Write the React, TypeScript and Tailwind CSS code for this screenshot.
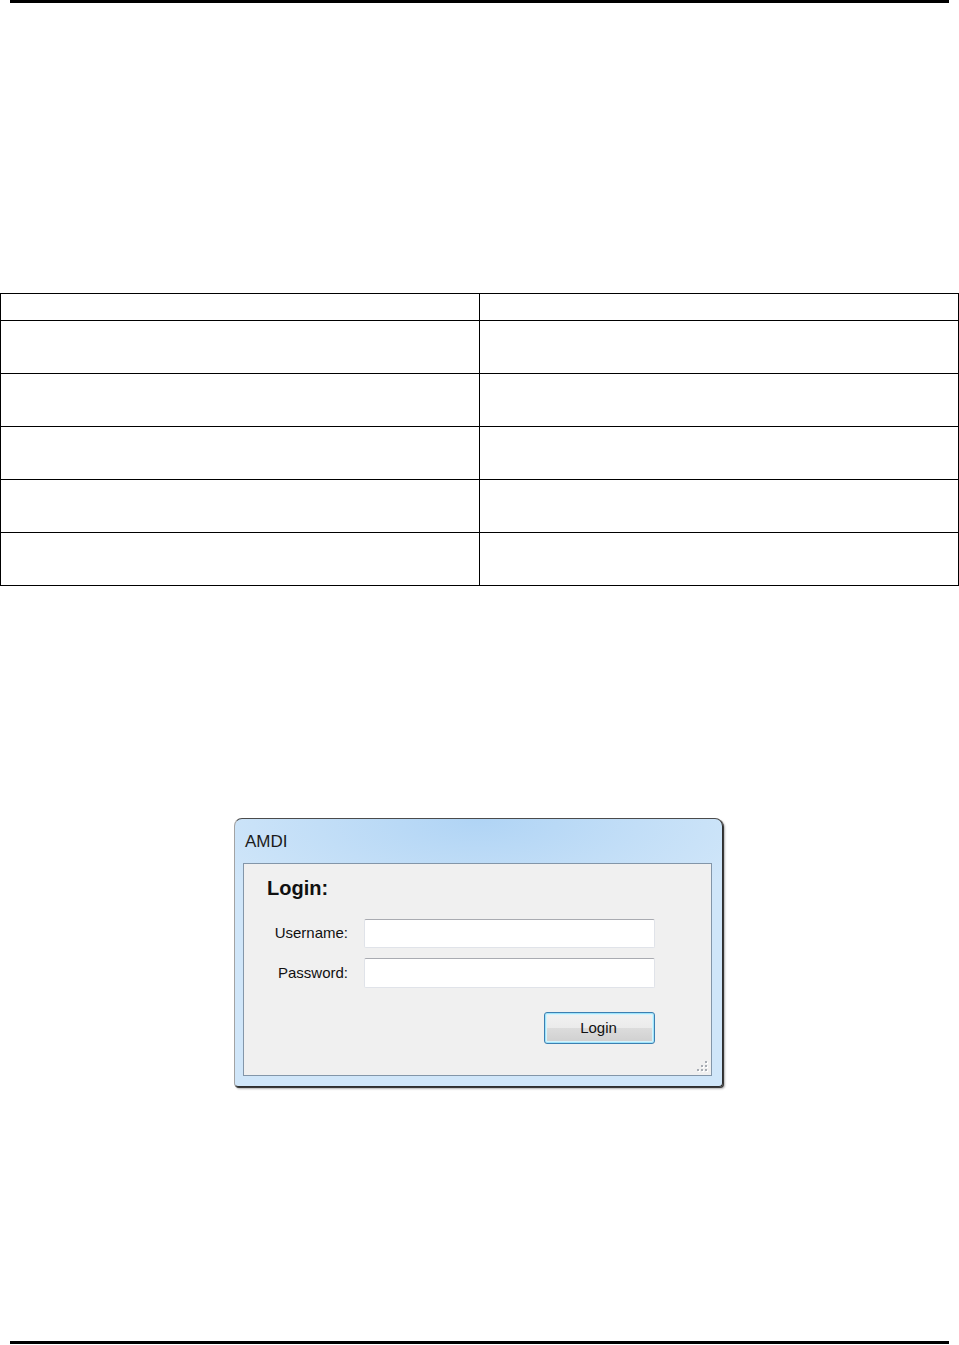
const rows = [0, 1, 2, 3, 4];

function ResizeGrip() {
  const dots = [
    [10, 2],
    [10, 6],
    [6, 6],
    [10, 10],
    [6, 10],
    [2, 10],
  ];
  return (
    <svg width="13" height="13" viewBox="0 0 13 13" className="absolute bottom-[3px] right-[3px]">
      {dots.map(([x, y]) => (
        <g key={`${x}-${y}`}>
          <rect x={x + 1} y={y + 1} width="2" height="2" fill="#ffffff" />
          <rect x={x} y={y} width="2" height="2" fill="#a7acb3" />
        </g>
      ))}
    </svg>
  );
}

function LoginWindow() {
  return (
    <div className="ml-[234px] flex h-[269px] w-[489px] flex-col rounded-t-[8px] rounded-b-[4px] border border-t-[#4b4b4b] border-l-[#a3a3a3] border-r-[#2e2e2e] border-b-[#2e2e2e] bg-[radial-gradient(ellipse_60%_40%_at_50%_0%,#b0d4f5_0%,#c2def7_55%,#d0e6f9_100%)] shadow-[1px_1px_0_#3a3a3a,2px_2px_2px_rgba(0,0,0,0.3)]">
      <div className="flex h-[44px] items-center pl-[10px] pt-[2px] text-[17px] text-[#1b1b1b]">
        AMDI
      </div>
      <div className="relative mb-[10px] ml-[8px] mr-[10px] h-[213px] border border-[#8396a9] bg-[#f0f0f0]">
        <div className="pl-[23px] pt-[12px] text-[20px] font-bold leading-[24px] text-[#111]">
          Login:
        </div>

        <div className="mt-[19px] flex items-center">
          <div className="w-[104px] text-right text-[15px] text-[#111]">Username:</div>
          <div className="ml-[16px] h-[29px] w-[291px] rounded-[2px] border border-[#e0e3e9] border-t-[#a9abb1] bg-white" />
        </div>

        <div className="mt-[10px] flex items-center">
          <div className="w-[104px] text-right text-[15px] text-[#111]">Password:</div>
          <div className="ml-[16px] h-[30px] w-[291px] rounded-[2px] border border-[#e0e3e9] border-t-[#a9abb1] bg-white" />
        </div>

        <div className="ml-[300px] mt-[24px] flex h-[32px] w-[111px] items-center justify-center rounded-[3px] border border-[#3c7fb1] bg-[linear-gradient(to_bottom,#f2f2f2_0%,#ebebeb_50%,#dcdcdc_50%,#cfcfcf_100%)] pr-[2px] text-[15px] text-[#111] shadow-[inset_0_0_0_1px_#9fe4fb,inset_0_0_0_2px_#d6f3fd]">
          Login
        </div>

        <ResizeGrip />
      </div>
    </div>
  );
}

export default function App() {
  return (
    <div className="min-h-[1345px] w-[959px] bg-white font-['Liberation_Sans',Arial,sans-serif]">
      <div className="mx-[10px] h-[3px] bg-black" />

      <div className="mt-[290px] grid grid-cols-[479px_479px] border-l border-t border-black">
        <div className="h-[27px] border-b border-r border-black" />
        <div className="h-[27px] border-b border-r border-black" />
        {rows.map((r) => (
          <div key={r} className="contents">
            <div className="h-[53px] border-b border-r border-black" />
            <div className="h-[53px] border-b border-r border-black" />
          </div>
        ))}
      </div>

      <div className="mt-[232px]">
        <LoginWindow />
      </div>

      <div className="mx-[10px] mt-[254px] h-[3px] bg-black" />
    </div>
  );
}
